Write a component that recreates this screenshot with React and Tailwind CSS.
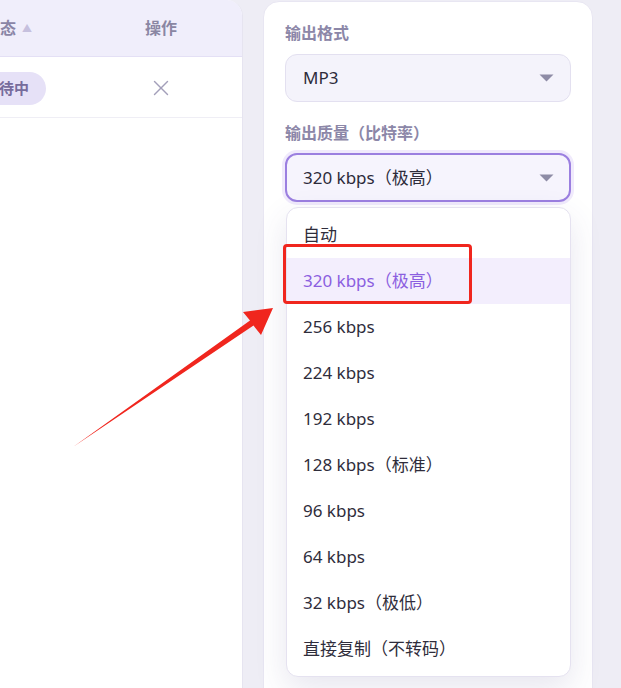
import { X } from 'lucide-react';

const BITRATES = [
  '自动',
  '320 kbps（极高）',
  '256 kbps',
  '224 kbps',
  '192 kbps',
  '128 kbps（标准）',
  '96 kbps',
  '64 kbps',
  '32 kbps（极低）',
  '直接复制（不转码）',
];

const FONT = { fontFamily: '"Noto Sans", "Noto Sans CJK SC", sans-serif' };

const Caret = () => (
  <svg width="15" height="8" viewBox="0 0 15 8" className="shrink-0">
    <path d="M0.5 0.5 H14.5 L7.5 7.5 Z" fill="#8e8ca6" />
  </svg>
);

const App = () => {
  const selected = '320 kbps（极高）';

  return (
    <div className="relative h-[688px] w-[621px] overflow-hidden bg-[#eeedf5]" style={FONT}>
      <div className="flex h-full">
        {/* Task table (clipped on the left) */}
        <div className="h-full w-[243px] overflow-hidden rounded-tr-[16px] border-r border-[#e6e4f0] bg-white">
          <div className="flex h-[57px] items-center border-b border-[#e4e0f5] bg-[#f0eefb]">
            <div className="-ml-[16px] flex w-[96px] shrink-0 items-center gap-[6px] text-[16px] font-bold text-[#8a85a6]">
              <span className="whitespace-nowrap">状态</span>
              <span className="text-[10px] text-[#c6c0de]">▲</span>
            </div>
            <div className="flex-1 text-center text-[16px] font-bold text-[#8a86a3]">操作</div>
          </div>
          <div className="flex h-[61px] items-center border-b border-[#efeef5] pt-[2px]">
            <div className="-ml-[30px] w-[110px] shrink-0">
              <span className="inline-flex h-[33px] items-center whitespace-nowrap rounded-full bg-[#e6e1f7] pl-[14px] pr-[17px] text-[15px] font-semibold text-[#776c9c]">
                等待中
              </span>
            </div>
            <div className="flex flex-1 justify-center">
              <X className="h-[26px] w-[26px] text-[#a39fba]" strokeWidth={1.3} />
            </div>
          </div>
        </div>

        <div className="w-[20px]" />

        {/* Output settings */}
        <div className="mt-[1px] flex h-[700px] w-[330px] flex-col rounded-t-[16px] border border-[#e8e6f2] bg-white px-[21px] pt-[19px]">
          <p className="text-[16px] font-semibold text-[#8c87a8]">输出格式</p>
          <div className="mt-[9px] flex h-[48px] items-center justify-between rounded-[12px] border border-[#e3e0f0] bg-[#f4f3fb] pl-[17px] pr-[16px]">
            <span className="text-[17px] text-[#2d2b3a]">MP3</span>
            <Caret />
          </div>

          <p className="mt-[19px] text-[16px] font-semibold text-[#8c87a8]">输出质量（比特率）</p>
          <div className="mt-[8px] flex h-[49px] items-center justify-between rounded-[12px] border-2 border-[#9b7fe0] bg-[#f6f4fd] pl-[16px] pr-[15px] shadow-[0_0_0_3px_#f0eafc]">
            <span className="text-[17px] text-[#2d2b3a]">{selected}</span>
            <Caret />
          </div>

          <div className="mt-[5px] ml-[1px] rounded-[12px] border border-[#e5e2f0] bg-white py-[4px] shadow-[0_12px_32px_rgba(70,60,130,0.13)]">
            {BITRATES.map((rate) => {
              const active = rate === selected;
              return (
                <div
                  key={rate}
                  className={`flex h-[46px] items-center px-[16px] text-[17px] ${
                    active ? 'bg-[#f3eefd] text-[#8b5fe0]' : 'text-[#2f2d3b]'
                  }`}
                >
                  {rate}
                </div>
              );
            })}
          </div>
        </div>
      </div>

      {/* Annotation: red box + arrow */}
      <div className="absolute left-[283px] top-[244px] h-[60px] w-[189px] rounded-[4px] border-[3px] border-[#f0261e]" />
      <svg className="absolute left-0 top-0" width="621" height="688" viewBox="0 0 621 688">
        <path
          d="M73 447 L250 320.5 L243 312 L273 308 L261 335 L253.5 325.5 Z"
          fill="#f0261e"
        />
      </svg>
    </div>
  );
};

export default App;
